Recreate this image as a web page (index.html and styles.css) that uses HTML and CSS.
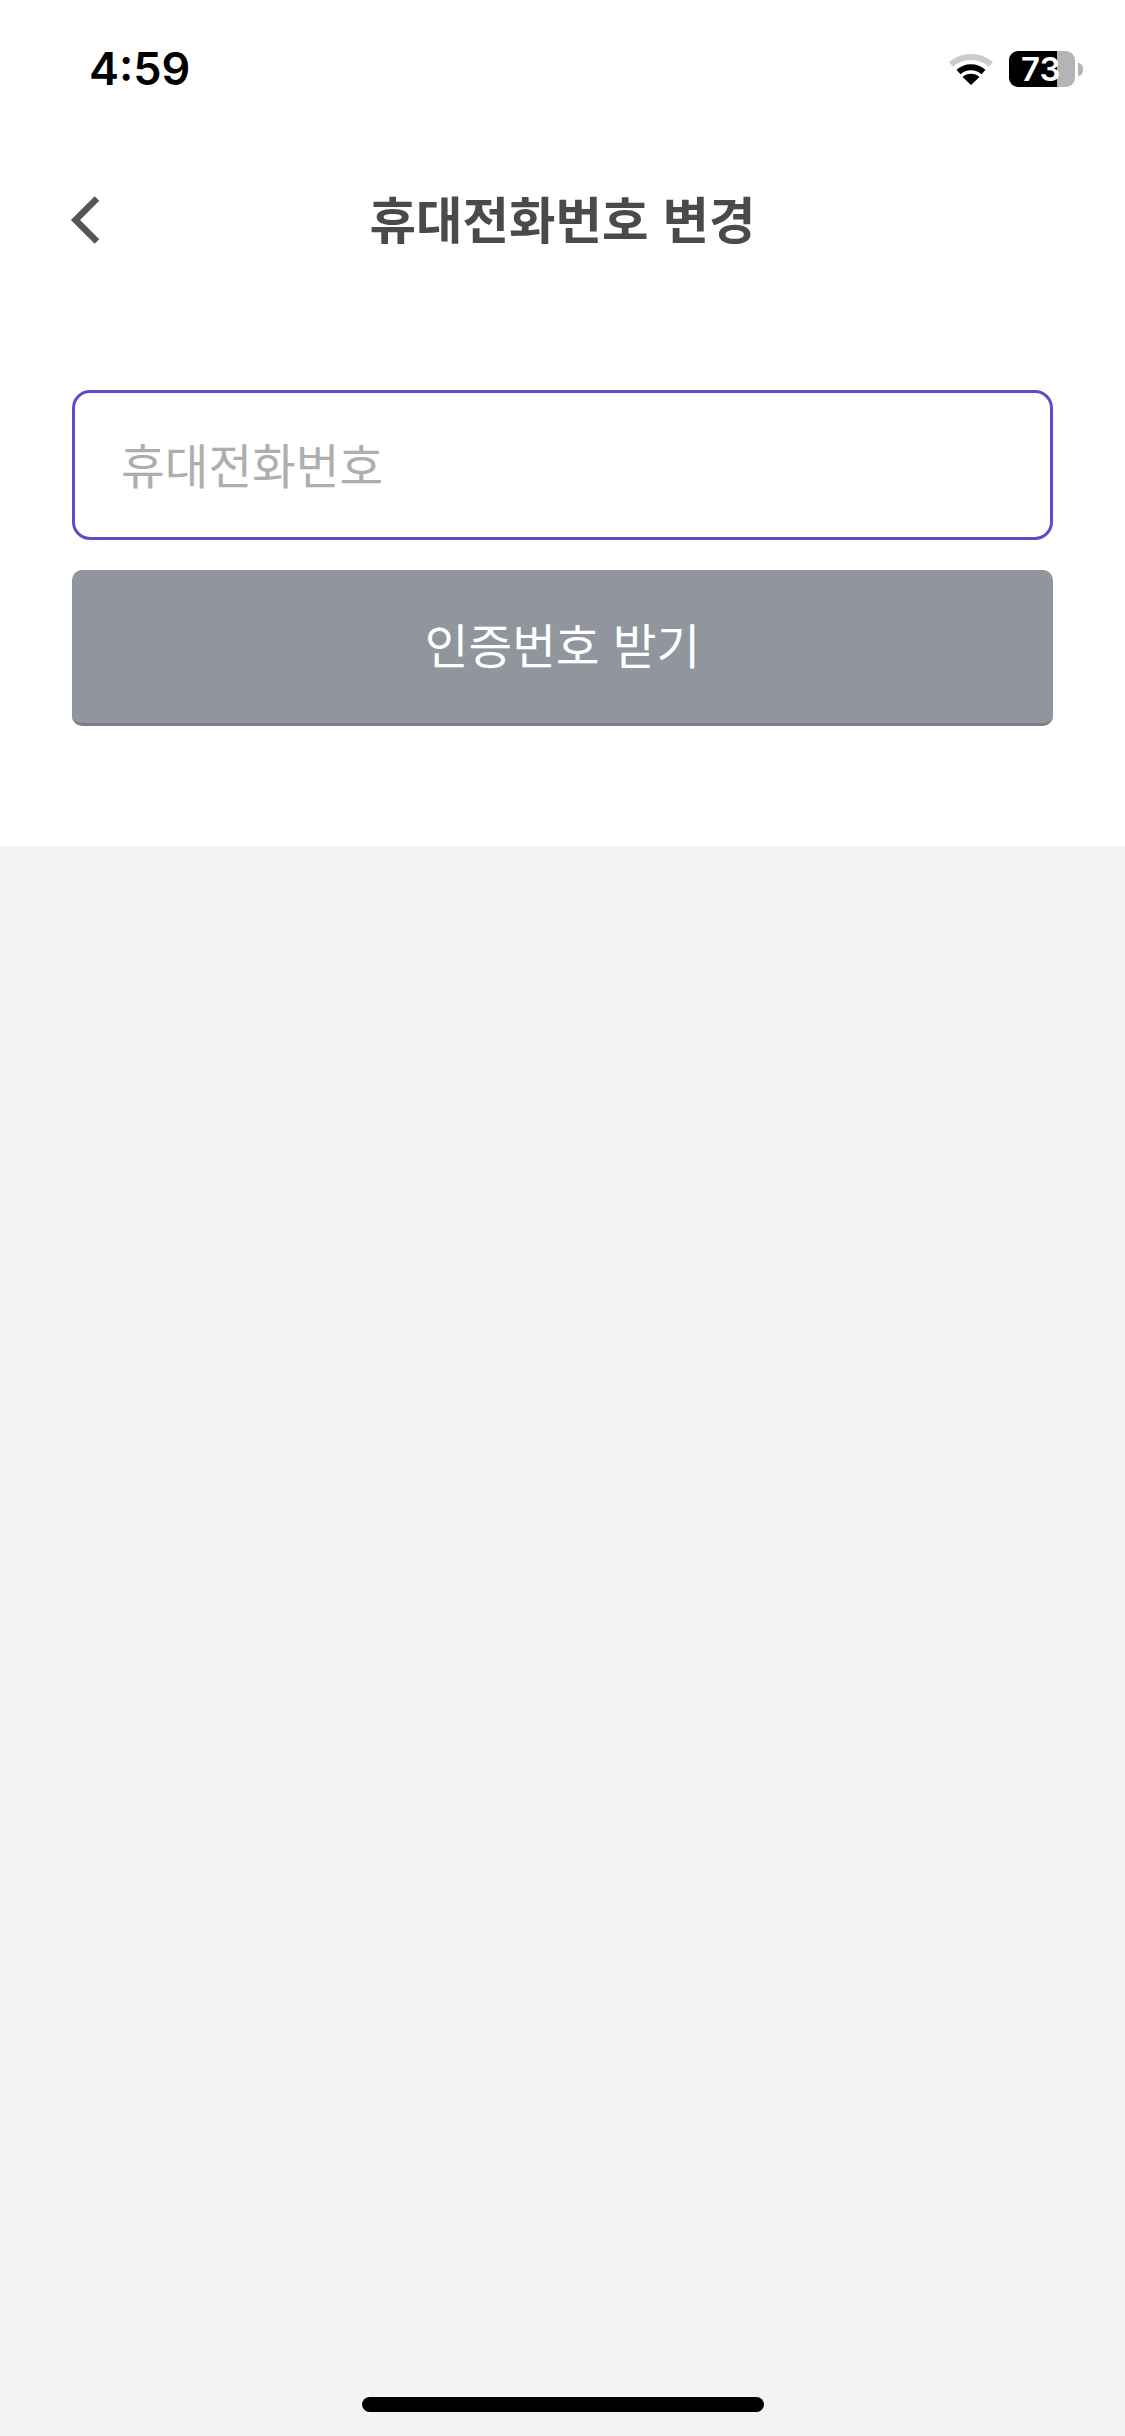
FILE: index.html
```html
<!DOCTYPE html>
<html lang="ko">
<head>
<meta charset="utf-8">
<title>휴대전화번호 변경</title>
<link rel="stylesheet" href="styles.css">
</head>
<body>
<div class="app">
  <section class="top">
    <div class="status">
      <span class="time">4:59</span>
      <div class="status-icons">
        <svg class="wifi" width="44" height="32" viewBox="0 0 44 32">
          <path d="M2 11.5C13 1.5 31 1.5 42 11.5" fill="none" stroke="#cccccc" stroke-width="6"/>
          <path d="M9.5 19C16.5 12.5 27.5 12.5 34.5 19" fill="none" stroke="#000" stroke-width="6"/>
          <path d="M22 32L13.5 24C18.5 19.8 25.5 19.8 30.5 24Z" fill="#000"/>
        </svg>
        <div class="battery">
          <div class="battery-body">
            <div class="battery-fill"></div>
            <div class="battery-rest"></div>
            <span class="battery-text">73</span>
          </div>
          <div class="battery-nub"></div>
        </div>
      </div>
    </div>
    <header class="nav">
      <svg class="back" width="30" height="50" viewBox="0 0 30 50">
        <path d="M27 3.5L5.5 25L27 46.5" fill="none" stroke="#555555" stroke-width="6.5"/>
      </svg>
      <h1 class="title">휴대전화번호 변경</h1>
    </header>
    <div class="form">
      <div class="field"><span class="field-text">휴대전화번호</span></div>
      <button class="submit" type="button"><span class="submit-text">인증번호 받기</span></button>
    </div>
  </section>
  <main class="rest">
    <div class="home-bar"></div>
  </main>
</div>
</body>
</html>
```
FILE: styles.css
```css
* {
  box-sizing: border-box;
}

html,
body {
  margin: 0;
  padding: 0;
}

body {
  width: 1125px;
  height: 2436px;
  overflow: hidden;
  font-family: "Noto Sans CJK KR", "Noto Sans", sans-serif;
}

.app {
  display: flex;
  flex-direction: column;
  height: 2436px;
}

.top {
  background: #ffffff;
  height: 846px;
  padding-top: 41px;
}

.status {
  display: flex;
  justify-content: space-between;
  align-items: center;
  height: 56px;
  padding: 0 42px 0 89px;
}

.time {
  font-family: Inter, "Liberation Sans", sans-serif;
  font-size: 45px;
  font-weight: 600;
  line-height: 56px;
  color: #000000;
}

.status-icons {
  display: flex;
  align-items: center;
  gap: 16px;
}

.wifi {
  display: block;
}

.battery {
  display: flex;
  align-items: center;
  gap: 3px;
}

.battery-body {
  position: relative;
  display: flex;
  width: 66px;
  height: 36px;
}

.battery-fill {
  width: 48px;
  border-radius: 9px 0 0 9px;
  background: #000000;
}

.battery-rest {
  flex: 1;
  border-radius: 0 9px 9px 0;
  background: #b4b4b4;
}

.battery-text {
  position: absolute;
  left: 12px;
  top: 0;
  font-family: Inter, "Liberation Sans", sans-serif;
  font-size: 33px;
  font-weight: 600;
  line-height: 36px;
  color: #ffffff;
}

.battery-nub {
  width: 5px;
  height: 13px;
  border-radius: 0 6px 6px 0;
  background: #b4b4b4;
}

.nav {
  position: relative;
  display: flex;
  align-items: center;
  justify-content: center;
  height: 96px;
  margin-top: 75px;
}

.back {
  position: absolute;
  left: 70px;
  top: 23px;
}

.title {
  margin: 0;
  font-size: 50.5px;
  font-weight: 700;
  line-height: 90px;
  padding-bottom: 6px;
  letter-spacing: 0;
  color: #4a4a4a;
}

.form {
  display: flex;
  flex-direction: column;
  gap: 30px;
  padding: 0 72px;
  margin-top: 122px;
}

.field {
  display: flex;
  align-items: center;
  height: 150px;
  padding: 0 0 4px 46px;
  border: 3px solid #5a4fcb;
  border-radius: 18px;
  background: #ffffff;
  font-size: 47.5px;
  color: #aeaeae;
}

.submit {
  height: 156px;
  padding: 0 0 6px;
  border: 0;
  border-bottom: 3px solid #7b7e85;
  border-radius: 10px;
  background: #90959e;
  font-family: inherit;
  font-size: 47.5px;
  font-weight: 400;
  color: #ffffff;
}

.rest {
  flex: 1;
  display: flex;
  flex-direction: column;
  justify-content: flex-end;
  align-items: center;
  padding-bottom: 24px;
  background: #f3f3f3;
}

.home-bar {
  width: 402px;
  height: 15px;
  border-radius: 8px;
  background: #000000;
}
```
